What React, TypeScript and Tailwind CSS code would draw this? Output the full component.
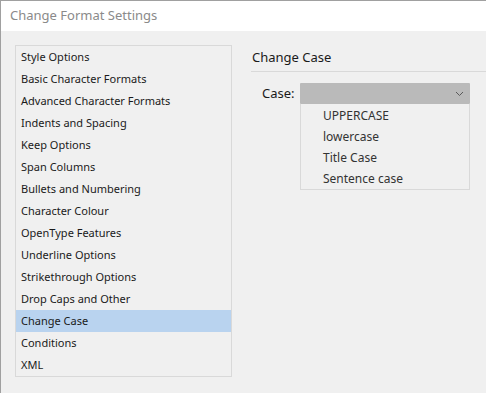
import React from "react";

const sections = [
  "Style Options",
  "Basic Character Formats",
  "Advanced Character Formats",
  "Indents and Spacing",
  "Keep Options",
  "Span Columns",
  "Bullets and Numbering",
  "Character Colour",
  "OpenType Features",
  "Underline Options",
  "Strikethrough Options",
  "Drop Caps and Other",
  "Change Case",
  "Conditions",
  "XML",
];

const caseOptions = ["UPPERCASE", "lowercase", "Title Case", "Sentence case"];

export default function App() {
  const selected = "Change Case";

  return (
    <div
      className="w-[486px] h-[393px] overflow-hidden flex flex-col border-t border-l border-[#a0a0a0] bg-[#f0f0f0]"
      style={{ fontFamily: '"Noto Sans", "Open Sans", sans-serif' }}
    >
      {/* 타이틀 바 */}
      <div className="h-[30px] shrink-0 bg-white flex items-center pl-[9px] text-[13px] text-[#8a8a8a]">
        Change Format Settings
      </div>

      <div className="flex flex-1 pt-[14px] pl-[14px]">
        {/* 좌측 목록 */}
        <div className="w-[217px] h-[332px] border border-[#d9d9d9] flex flex-col">
          {sections.map((name) => (
            <div
              key={name}
              className={`h-[22px] shrink-0 flex items-center pl-[5px] text-[11px] text-[#1a1a1a] ${
                name === selected ? "bg-[#b9d3ef]" : ""
              }`}
            >
              {name}
            </div>
          ))}
        </div>

        {/* 우측 설정 */}
        <div className="flex-1 pl-[19px]">
          <div className="h-[27px] flex items-center pl-[1px] text-[13px] text-[#1a1a1a] border-b border-[#d9d9d9]">
            Change Case
          </div>

          <div className="flex pt-[11px] pl-[11px]">
            <div className="w-[38px] h-[21px] flex items-center text-[13px] text-[#1a1a1a]">Case:</div>
            <div className="w-[170px] flex flex-col">
              <div className="h-[21px] bg-[#bababa] rounded-[1px] flex items-center justify-end pr-[6px]">
                <svg width="9" height="6" viewBox="0 0 9 6" fill="none">
                  <path d="M1 1l3.5 3.5L8 1" stroke="#5a5a5a" strokeWidth="1" />
                </svg>
              </div>
              <div className="border border-t-0 border-[#d9d9d9] pt-[1px]">
                {caseOptions.map((opt) => (
                  <div key={opt} className="h-[21px] flex items-center pl-[22px] text-[12px] text-[#333]">
                    {opt}
                  </div>
                ))}
              </div>
            </div>
          </div>
        </div>
      </div>
    </div>
  );
}
